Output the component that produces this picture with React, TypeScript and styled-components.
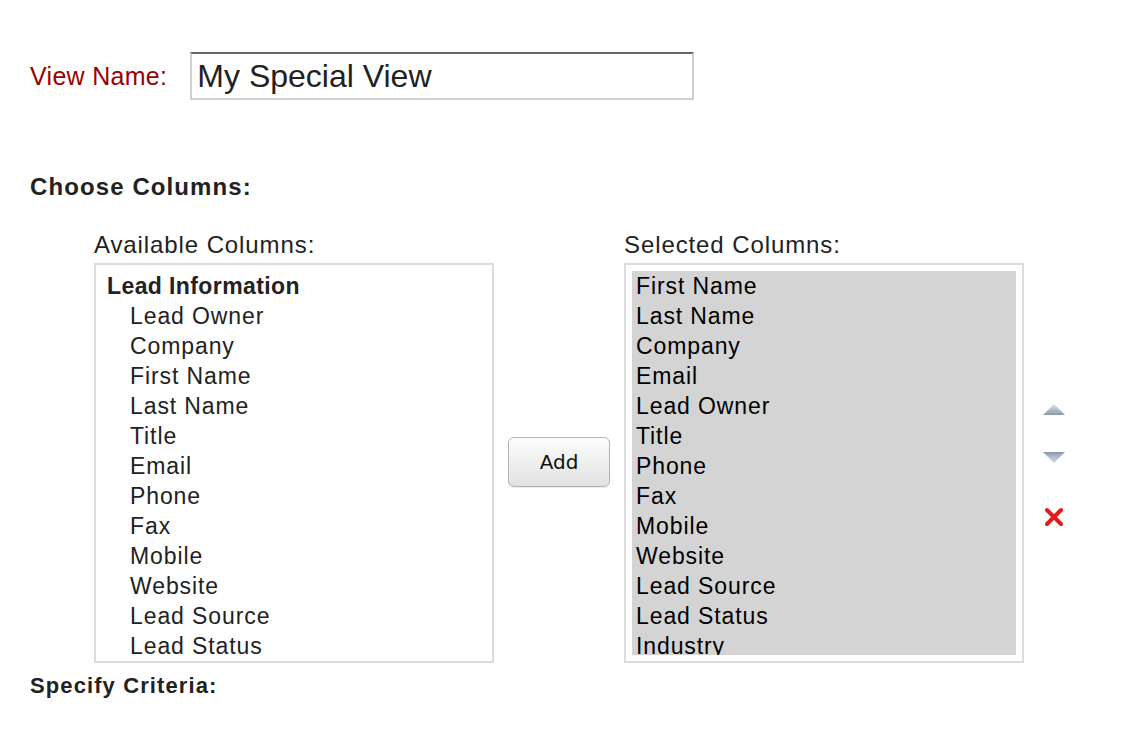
import React from "react";
import styled, { createGlobalStyle } from "styled-components";

const GlobalStyle = createGlobalStyle`
  html, body {
    margin: 0;
    padding: 0;
    background: #fff;
  }
  body {
    font-family: "Liberation Sans", Arial, sans-serif;
    color: #222;
  }
`;

const Page = styled.div`
  padding: 52px 0 0 30px;
  display: flex;
  flex-direction: column;
`;

const NameRow = styled.div`
  display: flex;
  align-items: center;
  gap: 23px;
`;

const NameLabel = styled.label`
  font-size: 25px;
  color: #990000;
  letter-spacing: 0.3px;
`;

const NameInput = styled.input`
  box-sizing: border-box;
  width: 504px;
  height: 48px;
  padding: 0 5px;
  border: 2px solid #cfcfcf;
  border-top-color: #666;
  font-family: "Liberation Sans", Arial, sans-serif;
  font-size: 32px;
  color: #222;
  outline: none;
`;

const Heading = styled.h3<{ $top: number; $size: number; $spacing: number }>`
  margin: ${(p) => p.$top}px 0 0;
  font-size: ${(p) => p.$size}px;
  font-weight: bold;
  letter-spacing: ${(p) => p.$spacing}px;
  color: #222;
  line-height: 24px;
`;

const Chooser = styled.div`
  display: flex;
  align-items: flex-end;
  margin: 33px 0 0 64px;
`;

const ListColumn = styled.div`
  display: flex;
  flex-direction: column;
  width: 400px;
`;

const ListCaption = styled.div`
  font-size: 24px;
  letter-spacing: 0.9px;
  line-height: 26px;
  margin-bottom: 5px;
`;

const ListBox = styled.div`
  box-sizing: border-box;
  height: 400px;
  border: 2px solid #dcdcdc;
  padding: 6px;
  overflow: hidden;
`;

const ListInner = styled.div<{ $selected?: boolean }>`
  height: 100%;
  overflow: hidden;
  background: ${(p) => (p.$selected ? "#d4d4d4" : "transparent")};
`;

const Item = styled.div<{ $kind: "group" | "option" | "selected" }>`
  height: 30px;
  line-height: 30px;
  font-size: 23px;
  letter-spacing: ${(p) => (p.$kind === "group" ? 0.4 : 0.9)}px;
  white-space: nowrap;
  color: ${(p) => (p.$kind === "selected" ? "#000" : "#222")};
  font-weight: ${(p) => (p.$kind === "group" ? "bold" : "normal")};
  padding-left: ${(p) => (p.$kind === "group" ? 5 : p.$kind === "option" ? 28 : 4)}px;
`;

const Middle = styled.div`
  width: 130px;
  height: 400px;
  display: flex;
  align-items: center;
  justify-content: center;
`;

const AddButton = styled.button`
  box-sizing: border-box;
  width: 102px;
  height: 50px;
  margin-top: -2px;
  border: 1px solid #b4b4b4;
  border-radius: 6px;
  background: linear-gradient(#fdfdfd, #ececec 60%, #e2e2e2);
  font-family: "DejaVu Sans", Verdana, sans-serif;
  font-size: 20px;
  color: #111;
  box-shadow: 0 1px 1px rgba(0, 0, 0, 0.08);
`;

const Tools = styled.div`
  height: 400px;
  margin-left: 18px;
  display: flex;
  flex-direction: column;
  align-items: center;
  padding-top: 137px;
  box-sizing: border-box;
`;

const ToolButton = styled.div<{ $gap: number }>`
  width: 24px;
  height: 20px;
  display: flex;
  align-items: center;
  justify-content: center;
  margin-top: ${(p) => p.$gap}px;
`;

const available = [
  "Lead Owner",
  "Company",
  "First Name",
  "Last Name",
  "Title",
  "Email",
  "Phone",
  "Fax",
  "Mobile",
  "Website",
  "Lead Source",
  "Lead Status",
  "Industry",
];

const selected = [
  "First Name",
  "Last Name",
  "Company",
  "Email",
  "Lead Owner",
  "Title",
  "Phone",
  "Fax",
  "Mobile",
  "Website",
  "Lead Source",
  "Lead Status",
  "Industry",
];

function Arrow({ down }: { down?: boolean }) {
  const id = down ? "arrDown" : "arrUp";
  return (
    <svg width="24" height="14" viewBox="0 0 24 14">
      <defs>
        <linearGradient id={id} x1="0" y1="0" x2="0" y2="1">
          <stop offset="0" stopColor={down ? "#8a96a6" : "#d8e2ea"} />
          <stop offset="0.5" stopColor="#b4c0cc" />
          <stop offset="1" stopColor={down ? "#c9d4de" : "#8e98a4"} />
        </linearGradient>
      </defs>
      <polygon
        points={down ? "1,2 23,2 12,13" : "12,1 23,12 1,12"}
        fill={`url(#${id})`}
      />
    </svg>
  );
}

function RemoveIcon() {
  return (
    <svg width="20" height="20" viewBox="0 0 20 20">
      <path
        d="M3 3 L17 17 M17 3 L3 17"
        stroke="#e8191b"
        strokeWidth="4"
        strokeLinecap="round"
      />
    </svg>
  );
}

export default function App() {
  return (
    <>
      <GlobalStyle />
      <Page>
        <NameRow>
          <NameLabel>View Name:</NameLabel>
          <NameInput defaultValue="My Special View" />
        </NameRow>

        <Heading $top={75} $size={24} $spacing={1.1}>
          Choose Columns:
        </Heading>

        <Chooser>
          <ListColumn>
            <ListCaption>Available Columns:</ListCaption>
            <ListBox>
              <ListInner>
                <Item $kind="group">Lead Information</Item>
                {available.map((name) => (
                  <Item key={name} $kind="option">
                    {name}
                  </Item>
                ))}
              </ListInner>
            </ListBox>
          </ListColumn>

          <Middle>
            <AddButton>Add</AddButton>
          </Middle>

          <ListColumn>
            <ListCaption>Selected Columns:</ListCaption>
            <ListBox>
              <ListInner $selected>
                {selected.map((name) => (
                  <Item key={name} $kind="selected">
                    {name}
                  </Item>
                ))}
              </ListInner>
            </ListBox>
          </ListColumn>

          <Tools>
            <ToolButton $gap={0}>
              <Arrow />
            </ToolButton>
            <ToolButton $gap={27}>
              <Arrow down />
            </ToolButton>
            <ToolButton $gap={40}>
              <RemoveIcon />
            </ToolButton>
          </Tools>
        </Chooser>

        <Heading $top={11} $size={22} $spacing={1.1}>
          Specify Criteria:
        </Heading>
      </Page>
    </>
  );
}
